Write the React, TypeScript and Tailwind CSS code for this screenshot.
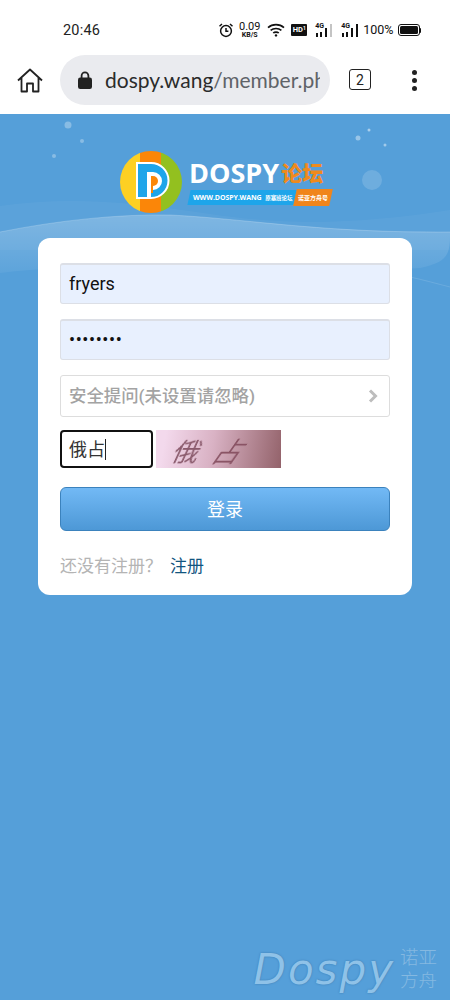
const cjk = "font-['Roboto','Noto_Sans_CJK_SC',sans-serif]";

function StatusIcons() {
  return (
    <div className="flex items-center text-[#111]">
      <svg width="16" height="16" viewBox="0 0 16 16" className="mr-[4px]" fill="none" stroke="#111" strokeWidth="1.5">
        <circle cx="8" cy="9" r="5.4" />
        <path d="M8 6v3.2h2.4M1.5 4.2 4 2M14.5 4.2 12 2" />
      </svg>
      <div className="mr-[6px] flex w-[23px] flex-col items-center font-['Roboto',sans-serif] leading-none">
        <span className="text-[11px] leading-[9px]">0.09</span>
        <span className="mt-[1px] text-[7px] font-bold leading-[7px]">KB/S</span>
      </div>
      <svg width="18" height="14" viewBox="0 0 18 14" className="mr-[6px]" fill="none" stroke="#111" strokeWidth="1.6">
        <path d="M1 4.6c4.4-4 11.6-4 16 0M3.6 7.4c3-2.6 7.8-2.6 10.8 0M6.2 10c1.4-1.2 4.2-1.2 5.6 0" />
        <circle cx="9" cy="12.4" r="1.2" fill="#111" stroke="none" />
      </svg>
      <div className="mr-[8px] flex h-[12px] w-[16px] items-start justify-center rounded-[1px] bg-[#111] pt-[2px] font-['Roboto',sans-serif] text-[7.5px] font-bold leading-[8px] text-white">
        HD<span className="text-[5px] leading-[5px]">1</span>
      </div>
      <Signal weak />
      <div className="w-[8px]" />
      <Signal />
      <span className="ml-[4px] font-['Roboto',sans-serif] text-[12.5px] leading-none">100%</span>
      <div className="ml-[4px] flex items-center">
        <div className="h-[12px] w-[22px] rounded-[3px] border border-[#111] bg-white p-[1px]">
          <div className="h-full w-full rounded-[1.5px] bg-[#111]" />
        </div>
        <div className="h-[5px] w-[1.5px] rounded-r-sm bg-[#111]" />
      </div>
    </div>
  );
}

function Signal({ weak }: { weak?: boolean }) {
  return (
    <div className="relative h-[15px] w-[18px]">
      <span className="absolute left-0 top-0 font-['Roboto',sans-serif] text-[7px] font-bold leading-[7px]">4G</span>
      <svg width="18" height="15" viewBox="0 0 18 15" className="absolute left-0 top-0" fill="#111">
        <rect x="1" y="10" width="2" height="4" />
        <rect x="5" y="9" width="2" height="5" />
        <rect x="10" y="5" width="2" height="9" />
        <rect x="15" y="1" width="2" height="13" fill={weak ? '#c4c4c4' : '#111'} />
      </svg>
    </div>
  );
}

function BrowserBar() {
  return (
    <header className="bg-white">
      <div className="flex h-[55px] items-center justify-between pl-[63px] pr-[29px] pt-[5px]">
        <span className="pt-[2px] font-['Roboto',sans-serif] text-[14.5px] tracking-[0.2px] text-[#222]">20:46</span>
        <StatusIcons />
      </div>
      <div className="flex h-[59px] items-start pl-[17px]">
        <svg width="26" height="25" viewBox="0 0 26 25" className="mt-[13px]" fill="none" stroke="#222" strokeWidth="1.8" strokeLinejoin="round">
          <path d="M1 12.5 13 1.5l12 11M4.5 10v13.5h5.5v-8h6v8h5.5V10" />
        </svg>
        <div className="ml-[17px] flex h-[50px] w-[270px] items-center rounded-full bg-[#eaebef] pl-[18px] pr-[10px]">
          <svg width="14" height="18" viewBox="0 0 14 18" fill="#222" className="shrink-0">
            <path d="M3.6 7V4.8a3.4 3.4 0 0 1 6.8 0V7" fill="none" stroke="#222" strokeWidth="1.8" />
            <rect x="0" y="6.5" width="14" height="11.5" rx="2.2" />
          </svg>
          <div className="ml-[13px] overflow-hidden whitespace-nowrap font-['Lato',sans-serif] text-[21px] leading-[26px]">
            <span className="text-[#2b2b2b]">dospy.wang</span>
            <span className="text-[#5f6368]">/member.php</span>
          </div>
        </div>
        <div className="ml-[19px] mt-[14px] flex h-[21px] w-[22px] items-center justify-center rounded-[3px] border-[1.5px] border-[#222] font-['Roboto',sans-serif] text-[14px] leading-none text-[#222]">
          2
        </div>
        <div className="ml-[41px] mt-[15px] flex flex-col gap-[3px]">
          <div className="h-[5px] w-[5px] rounded-full bg-[#222]" />
          <div className="h-[5px] w-[5px] rounded-full bg-[#222]" />
          <div className="h-[5px] w-[5px] rounded-full bg-[#222]" />
        </div>
      </div>
    </header>
  );
}

function Backdrop() {
  return (
    <svg width="450" height="200" viewBox="0 0 450 200" className="absolute left-0 top-0">
      <defs>
        <linearGradient id="band" x1="0" y1="0" x2="0" y2="1">
          <stop offset="0" stopColor="#fff" stopOpacity="0.22" />
          <stop offset="1" stopColor="#fff" stopOpacity="0.05" />
        </linearGradient>
      </defs>
      <path d="M0 92c70-10 130-4 210 8s150 10 240-4v40H0Z" fill="#fff" opacity="0.04" />
      <path d="M0 118C60 106 120 100 170 101c80 4 150 18 280 17 0 20 0 30-30 36-120 8-300-10-420 5Z" fill="url(#band)" />
      <path d="M0 118C60 106 120 100 170 101c80 4 150 18 280 17" fill="none" stroke="#fff" strokeWidth="1" opacity="0.2" />
      <path d="M410 163c14 3 28 7 40 10" fill="none" stroke="#fff" strokeWidth="1" opacity="0.12" />
      <g fill="#fff">
        <circle cx="68" cy="11" r="3.5" opacity="0.3" />
        <circle cx="82" cy="27" r="2" opacity="0.3" />
        <circle cx="54" cy="42" r="2" opacity="0.3" />
        <circle cx="358" cy="24" r="2.5" opacity="0.4" />
        <circle cx="369" cy="16" r="1.5" opacity="0.5" />
        <circle cx="385" cy="31" r="1.5" opacity="0.45" />
        <circle cx="372" cy="66" r="10" opacity="0.15" />
      </g>
    </svg>
  );
}

function Logo() {
  return (
    <div className="flex items-center justify-center pl-[1px]">
      <svg width="62" height="62" viewBox="0 0 62 62">
        <defs>
          <clipPath id="disc">
            <circle cx="31" cy="31" r="31" />
          </clipPath>
        </defs>
        <g clipPath="url(#disc)">
          <rect width="20" height="62" fill="#fdd023" />
          <rect x="20" width="21" height="62" fill="#fb8608" />
          <rect x="41" width="21" height="62" fill="#93c01f" />
        </g>
        <path d="M17 12h14a17.5 17.5 0 0 1 0 35H17Z" fill="#1ea5ea" stroke="#fff" strokeWidth="2" />
        <path d="M27 46V21h6a9 9 0 0 1 0 18h-2v7Z" fill="#fff" />
        <path d="M31 35V25h2a5 5 0 0 1 0 10Z" fill="#fb8608" />
        <path d="M31 35h2v7h-2Z" fill="#fb8608" />
      </svg>
      <div className="ml-[7px] w-[142px]">
        <div className="flex h-[27px] items-center whitespace-nowrap">
          <span className="font-['Open_Sans',sans-serif] text-[27px] font-bold leading-none text-white">DOSPY</span>
          <span className="ml-[2px] font-['Noto_Sans_CJK_SC',sans-serif] text-[21px] font-black leading-none text-[#ef8a1c]">论坛</span>
        </div>
        <div className="mt-[3px] flex h-[17px] items-center whitespace-nowrap">
          <div className="flex h-[15px] w-[107px] -skew-x-12 items-center bg-[#1ea5ea] pl-[4px]">
            <span className="skew-x-12 font-['Open_Sans',sans-serif] text-[7px] font-bold leading-none tracking-[-0.1px] text-white">
              WWW.DOSPY.WANG <span className="ml-[2px] font-['Noto_Sans_CJK_SC',sans-serif] text-[5.5px]">原塞班论坛</span>
            </span>
          </div>
          <div className="flex h-[17px] w-[37px] -skew-x-12 items-center justify-center bg-[#f0851b]">
            <span className="skew-x-12 font-['Noto_Sans_CJK_SC',sans-serif] text-[6px] font-bold leading-none text-white">诺亚方舟号</span>
          </div>
        </div>
      </div>
    </div>
  );
}

function LoginCard() {
  const filled = "flex h-[41px] items-center rounded-[3px] border border-[#dcdfe6] border-t-2 bg-[#e8f0fe] px-[8px] pb-[2px] font-['Roboto',sans-serif] text-[18px] text-[#111]";
  return (
    <div className={`mx-[38px] mt-[25px] h-[357px] rounded-[12px] bg-white px-[22px] pt-[25px] ${cjk}`}>
      <div className={filled}>fryers</div>
      <div className={`${filled} mt-[15px] text-[15px] tracking-[0.6px]`}>••••••••</div>
      <div className="mt-[15px] flex h-[42px] items-center justify-between rounded-[3px] border border-[#dddddd] bg-white pl-[8px] pr-[11px] text-[17.4px] font-medium text-[#a3a3a3]">
        <span>安全提问(未设置请忽略)</span>
        <svg width="10" height="14" viewBox="0 0 10 14" fill="none" stroke="#bdbdbd" strokeWidth="3">
          <path d="m2 1.5 5.5 5.5L2 12.5" />
        </svg>
      </div>
      <div className="mt-[13px] flex items-center">
        <div className="flex h-[38px] w-[93px] items-center rounded-[4px] border-2 border-[#111] bg-white px-[7px] text-[18px] text-[#333]">
          俄占
          <span className="h-[21px] w-px bg-[#222]" />
        </div>
        <div className="ml-[3px] flex h-[38px] w-[125px] items-end overflow-hidden bg-[linear-gradient(100deg,#f3d9ec_8%,#d9b2c4_45%,#93626a_100%)] pl-[18px]">
          <span className="inline-block -skew-x-[25deg] text-[26px] leading-[30px] text-[#8a5a6c] blur-[0.4px]">俄</span>
          <span className="ml-[16px] inline-block -skew-x-[35deg] text-[27px] leading-[30px] text-[#8a5465] blur-[0.4px]">占</span>
        </div>
      </div>
      <div className="mt-[19px] flex h-[44px] items-center justify-center rounded-[6px] border border-[#3b82bd] bg-[linear-gradient(#72b9f5,#4d98d6)] text-[18px] text-white">
        登录
      </div>
      <div className="mt-[23px] flex items-center text-[17px] leading-[24px]">
        <span className="text-[#b4b4b4]">还没有注册？</span>
        <span className="ml-[8px] text-[#12557f]">注册</span>
      </div>
    </div>
  );
}

function Watermark() {
  return (
    <div className="absolute bottom-[6px] right-[13px] flex items-center">
      <span className="font-['DejaVu_Sans',sans-serif] text-[42px] italic leading-[48px] tracking-[2px] text-[#8fc2e8] [text-shadow:0_0_2px_#3a78ad]">
        Dospy
      </span>
      <div className={`ml-[5px] flex flex-col text-[18.5px] font-light leading-[23px] text-[#85b9e1] ${cjk}`}>
        <span>诺亚</span>
        <span>方舟</span>
      </div>
    </div>
  );
}

export default function App() {
  return (
    <div className="flex h-[1000px] w-full flex-col overflow-hidden bg-[#559fd9]">
      <BrowserBar />
      <main className="relative flex-1">
        <Backdrop />
        <div className="relative pt-[37px]">
          <Logo />
          <LoginCard />
        </div>
        <Watermark />
      </main>
    </div>
  );
}
